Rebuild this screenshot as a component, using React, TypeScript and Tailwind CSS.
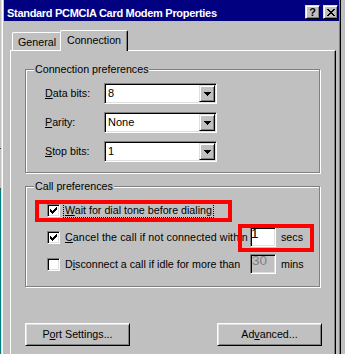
import React from "react";

const sunken =
  "border border-t-[#808080] border-l-[#808080] border-b-white border-r-white shadow-[inset_1px_1px_0_#000,inset_-1px_-1px_0_#dfdfdf]";
const raised =
  "border border-t-[#dfdfdf] border-l-[#dfdfdf] border-b-black border-r-black shadow-[inset_1px_1px_0_#fff,inset_-1px_-1px_0_#808080]";
const pushBtn =
  "border border-t-white border-l-white border-b-black border-r-black shadow-[inset_1px_1px_0_#dfdfdf,inset_-1px_-1px_0_#808080]";

function DownArrow() {
  return (
    <svg width="7" height="4" viewBox="0 0 7 4" shapeRendering="crispEdges">
      <rect x="0" y="0" width="7" height="1" fill="#000" />
      <rect x="1" y="1" width="5" height="1" fill="#000" />
      <rect x="2" y="2" width="3" height="1" fill="#000" />
      <rect x="3" y="3" width="1" height="1" fill="#000" />
    </svg>
  );
}

function CloseGlyph() {
  const px: [number, number, number][] = [
    [0, 0, 2], [6, 0, 2],
    [1, 1, 2], [5, 1, 2],
    [2, 2, 4],
    [3, 3, 2],
    [2, 4, 4],
    [1, 5, 2], [5, 5, 2],
    [0, 6, 2], [6, 6, 2],
  ];
  return (
    <svg width="8" height="7" viewBox="0 0 8 7" shapeRendering="crispEdges">
      {px.map(([x, y, w], i) => (
        <rect key={i} x={x} y={y} width={w} height="1" fill="#000" />
      ))}
    </svg>
  );
}

function CheckMark() {
  const rows: [number, number, number][] = [
    [6, 0, 1],
    [5, 1, 2],
    [0, 2, 1], [4, 2, 3],
    [0, 3, 2], [3, 3, 3],
    [0, 4, 5],
    [1, 5, 3],
    [2, 6, 1],
  ];
  return (
    <svg width="7" height="7" viewBox="0 0 7 7" shapeRendering="crispEdges">
      {rows.map(([x, y, w], i) => (
        <rect key={i} x={x} y={y} width={w} height="1" fill="#000" />
      ))}
    </svg>
  );
}

function Check({ checked }: { checked: boolean }) {
  return (
    <div className={`flex h-[13px] w-[13px] shrink-0 items-center justify-center bg-white ${sunken}`}>
      {checked && <CheckMark />}
    </div>
  );
}

function Combo({ value }: { value: string }) {
  return (
    <div className={`flex h-[21px] w-[113px] shrink-0 items-center bg-white ${sunken}`}>
      <span className="flex-1 pl-[3px] text-[11px] leading-[13px]">{value}</span>
      <div className={`mr-px flex h-[17px] w-[16px] items-center justify-center bg-[#c0c0c0] ${raised}`}>
        <DownArrow />
      </div>
    </div>
  );
}

function Group({
  title,
  className,
  children,
}: {
  title: string;
  className: string;
  children: React.ReactNode;
}) {
  return (
    <div className={`relative w-[295px] border border-[#808080] shadow-[inset_1px_1px_0_#fff,1px_1px_0_#fff] ${className}`}>
      <span className="absolute left-[8px] top-[-7px] whitespace-nowrap bg-[#c0c0c0] px-px leading-[13px]">
        {title}
      </span>
      {children}
    </div>
  );
}

export default function App() {
  return (
    <div className="relative flex h-[354px] w-[345px] overflow-hidden bg-[#c0c0c0] font-['Liberation_Sans',Arial,sans-serif] text-[10.7px] leading-[13px] text-black">
      {/* desktop sliver at the far left */}
      <div className="flex w-px shrink-0 flex-col">
        <div className="h-[148px]" />
        <div className="h-px bg-[#404040]" />
        <div className="h-[39px]" />
        <div className="h-px bg-[#404040]" />
        <div className="flex-1 bg-[#008080]" />
      </div>

      {/* window */}
      <div className="w-[340px] shrink-0 border-l border-r border-l-[#dfdfdf] border-r-black">
        <div className="flex h-full flex-col border-l border-r border-l-white border-r-[#808080] pl-px">
          {/* caption */}
          <div className="flex h-[21px] shrink-0 items-start bg-[#000080]">
            <span className="ml-[3px] mt-[6px] whitespace-nowrap text-[11px] font-bold leading-[14px] tracking-[-0.3px] text-white">
              Standard PCMCIA Card Modem Properties
            </span>
            <div className={`ml-auto mt-[5px] flex h-[14px] w-[15px] items-center justify-center bg-[#c0c0c0] ${raised}`}>
              <span className="text-[11px] font-bold leading-[11px]">?</span>
            </div>
            <div className={`ml-[3px] mr-px mt-[5px] flex h-[14px] w-[15px] items-center justify-center bg-[#c0c0c0] ${raised}`}>
              <CloseGlyph />
            </div>
          </div>

          {/* tabs */}
          <div className="mt-[9px] flex h-[20px] shrink-0 items-end pl-[8px]">
            <div className="flex h-[18px] w-[50px] items-center justify-center rounded-t-[2px] border-l border-r border-t border-l-white border-r-black border-t-white pt-[2px] shadow-[inset_-1px_0_0_#808080]">
              General
            </div>
            <div className="relative z-10 -mb-px -ml-[2px] flex h-[21px] w-[68px] items-center justify-center rounded-t-[2px] border-l border-r border-t border-l-white border-r-black border-t-white bg-[#c0c0c0] pb-[1px] shadow-[inset_-1px_0_0_#808080]">
              Connection
            </div>
          </div>

          {/* tab panel */}
          <div className="ml-[6px] mr-[3px] h-[320px] shrink-0 border-l border-r border-t border-l-white border-r-black border-t-white pl-[14px] pt-[18px] shadow-[inset_-1px_0_0_#808080]">
            <Group title="Connection preferences" className="flex flex-col gap-[8px] pb-[10px] pl-[19px] pt-[13px]">
              <div className="flex h-[21px] items-center">
                <span className="w-[59px] whitespace-nowrap">
                  <u className="underline underline-offset-1">D</u>ata bits:
                </span>
                <Combo value="8" />
              </div>
              <div className="flex h-[21px] items-center">
                <span className="w-[59px] whitespace-nowrap">
                  <u className="underline underline-offset-1">P</u>arity:
                </span>
                <Combo value="None" />
              </div>
              <div className="flex h-[21px] items-center">
                <span className="w-[59px] whitespace-nowrap">
                  <u className="underline underline-offset-1">S</u>top bits:
                </span>
                <Combo value="1" />
              </div>
            </Group>

            <Group title="Call preferences" className="mt-[13px] flex flex-col gap-[7px] pb-[12px] pl-[21px] pt-[13px]">
              <div className="flex h-[20px] items-center">
                <Check checked />
                <span className="ml-[3px] whitespace-nowrap border border-dotted border-black px-px leading-[14px]">
                  <u className="underline underline-offset-1">W</u>ait for dial tone before dialing
                </span>
              </div>
              <div className="flex h-[20px] items-center">
                <Check checked />
                <span className="ml-[3px] w-[187px] shrink-0 whitespace-nowrap border border-transparent px-px tracking-[0.1px]">
                  <u className="underline underline-offset-1">C</u>ancel the call if not connected within
                </span>
                <div className={`h-[20px] w-[26px] shrink-0 bg-white text-[13.5px] leading-[12px] ${sunken}`}>
                  1
                </div>
                <span className="ml-[5px]">secs</span>
              </div>
              <div className="flex h-[20px] items-center">
                <Check checked={false} />
                <span className="ml-[3px] w-[187px] shrink-0 whitespace-nowrap border border-transparent px-px">
                  D<u className="underline underline-offset-1">i</u>sconnect a call if idle for more than
                </span>
                <div className={`h-[20px] w-[26px] shrink-0 bg-[#c0c0c0] pl-px text-[13.5px] leading-[12px] text-[#808080] ${sunken}`}>
                  30
                </div>
                <span className="ml-[5px]">mins</span>
              </div>
            </Group>

            <div className="mt-[36px] flex gap-[87px]">
              <button className={`flex h-[23px] w-[105px] items-center justify-center bg-[#c0c0c0] ${pushBtn}`}>
                <span>
                  P<u className="underline underline-offset-1">o</u>rt Settings...
                </span>
              </button>
              <button className={`flex h-[23px] w-[105px] items-center justify-center bg-[#c0c0c0] ${pushBtn}`}>
                <span>
                  Ad<u className="underline underline-offset-1">v</u>anced...
                </span>
              </button>
            </div>
          </div>
        </div>
      </div>

      {/* annotation rectangles drawn over the screenshot */}
      <div className="pointer-events-none absolute left-[35px] top-[200px] h-[22px] w-[197px] border-4 border-[#ff0000]" />
      <div className="pointer-events-none absolute left-[238px] top-[224px] h-[28px] w-[76px] border-4 border-[#ff0000]" />
    </div>
  );
}
